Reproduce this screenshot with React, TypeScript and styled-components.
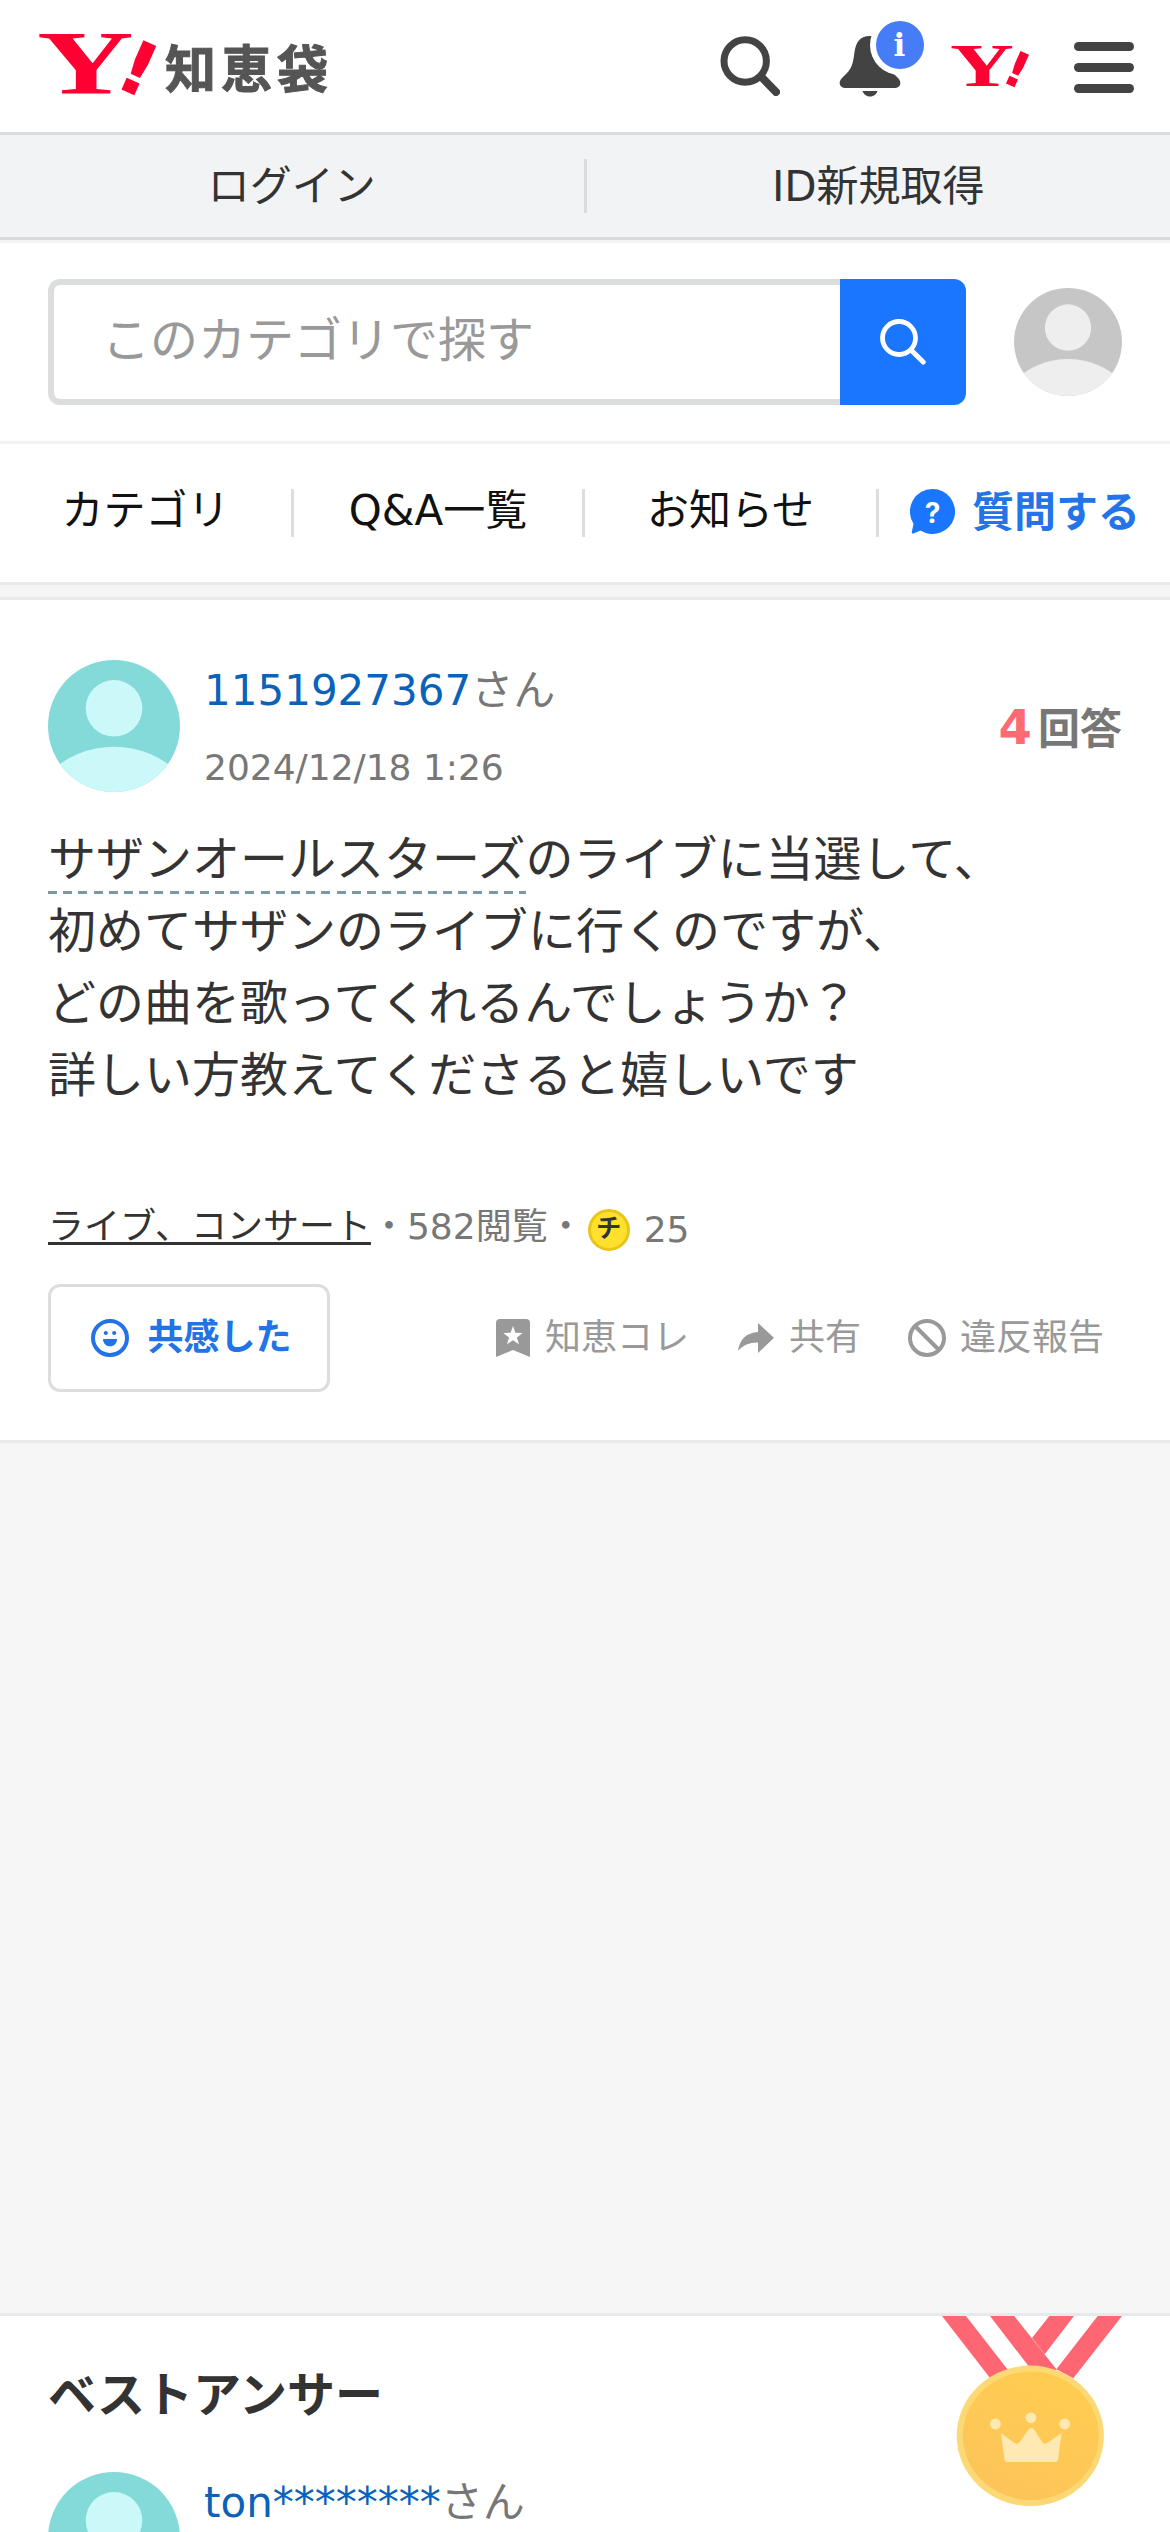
import React from "react";
import styled, { createGlobalStyle } from "styled-components";

const GlobalStyle = createGlobalStyle`
  *, *::before, *::after { box-sizing: border-box; }
  body {
    margin: 0;
    background: #fff;
    color: #333;
    font-family: "DejaVu Sans", "Noto Sans CJK JP", sans-serif;
  }
  a { color: inherit; text-decoration: none; }
  button { font: inherit; border: 0; padding: 0; margin: 0; background: none; }
  svg { display: block; flex: none; }
  h2, p { margin: 0; }
`;

const Page = styled.div`
  width: 1170px;
  height: 2532px;
  overflow: hidden;
  background: #fff;
`;

/* ---------- Masthead ---------- */

const Masthead = styled.header`
  height: 132px;
  padding: 0 36px 0 39px;
  display: flex;
  align-items: flex-start;
  justify-content: space-between;
`;

const Brand = styled.a`
  display: flex;
  gap: 9px;
  padding-top: 33px;
`;

const BrandName = styled.span`
  margin-top: -2px;
  font-family: "Noto Sans CJK JP", sans-serif;
  font-weight: 700;
  font-size: 51px;
  letter-spacing: 5px;
  line-height: 70px;
  color: #555;
  -webkit-text-stroke: 1px #555;
`;

const MastheadTools = styled.nav`
  display: flex;
  align-items: flex-start;
`;

const Tool = styled.button<{ $top: number; $left?: number }>`
  margin-top: ${(p) => p.$top}px;
  margin-left: ${(p) => p.$left ?? 0}px;
`;

/* ---------- Login strip ---------- */

const LoginStrip = styled.div`
  height: 108px;
  display: flex;
  align-items: center;
  background: #f1f3f5;
  border-top: 3px solid #d9dcdd;
  border-bottom: 3px solid #d9dadc;
`;

const LoginLink = styled.a`
  flex: 1;
  padding-top: 1px;
  text-align: center;
  font-size: 42px;
  line-height: 53px;
  & + & {
    border-left: 3px solid #d9dbdc;
  }
`;

/* ---------- Search ---------- */

const SearchArea = styled.div`
  height: 204px;
  padding: 36px 48px;
  border-top: 3px solid #f5f5f5;
  border-bottom: 3px solid #f2f2f2;
  display: flex;
  align-items: center;
  gap: 48px;
`;

const SearchForm = styled.div`
  display: flex;
  width: 918px;
  height: 126px;
`;

const SearchField = styled.div`
  flex: 1;
  border: 6px solid #dcdddd;
  border-right: 0;
  border-radius: 12px 0 0 12px;
  padding: 0 0 12px 48px;
  display: flex;
  align-items: center;
  color: #999;
  font-size: 48px;
`;

const SearchButton = styled.button`
  width: 126px;
  border-radius: 0 12px 12px 0;
  background: #1a75ff;
  display: flex;
  align-items: center;
  justify-content: center;
`;

/* ---------- Tabs ---------- */

const Tabs = styled.nav`
  display: flex;
  align-items: center;
  height: 138px;
`;

const Tab = styled.a<{ $width: number }>`
  width: ${(p) => p.$width}px;
  height: 48px;
  border-right: 3px solid #dcdddd;
  text-align: center;
  font-size: 42px;
  line-height: 43px;
  color: #111;
`;

const AskLink = styled.a`
  flex: 1;
  padding: 0 0 3px 31px;
  display: flex;
  align-items: center;
  gap: 17px;
  font-size: 42px;
  line-height: 48px;
  font-weight: 700;
  color: #2274e8;
`;

const AskLabel = styled.span`
  padding-top: 3px;
`;

const Spacer = styled.div<{ $height: number }>`
  height: ${(p) => p.$height}px;
  background: #f6f6f6;
  border-top: 3px solid #e9e9e9;
  border-bottom: 3px solid #e9e9e9;
`;

/* ---------- Question ---------- */

const Question = styled.article`
  height: 840px;
  padding: 60px 48px 0;
`;

const Author = styled.div`
  display: flex;
  height: 132px;
`;

const AuthorText = styled.div`
  flex: 1;
  margin-left: 24px;
  padding-top: 1px;
`;

const AuthorName = styled.div`
  font-size: 42px;
  line-height: 60px;
  color: #777;
  a { color: #0a62b9; }
`;

const PostedAt = styled.div`
  margin-top: 17px;
  font-size: 36px;
  line-height: 60px;
  color: #777;
`;

const AnswerCount = styled.div`
  margin-top: 37px;
  line-height: 60px;
  font-size: 42px;
  font-weight: 700;
  color: #777;
  display: flex;
  align-items: baseline;
  gap: 6px;
  strong { font-size: 48px; color: #fe6a74; }
`;

const QuestionBody = styled.p`
  margin-top: 31px;
  font-size: 48px;
  line-height: 72px;
  color: #333;
`;

const Keyword = styled.a`
  display: inline-block;
  height: 72px;
  vertical-align: top;
  background: repeating-linear-gradient(90deg, #7b98a8 0 9px, transparent 9px 15.19px) 0 68px / 100% 3px no-repeat;
`;

const Meta = styled.div`
  margin-top: 92px;
  height: 48px;
  display: flex;
  font-size: 36px;
  line-height: 48px;
  color: #777;
`;

const CategoryLink = styled.a`
  color: #333;
  text-decoration: underline;
  text-decoration-thickness: 3px;
  text-underline-offset: 3px;
  text-decoration-skip-ink: none;
`;

const Coins = styled.span`
  display: flex;
  align-items: center;
  gap: 14px;
  margin-left: 4px;
  padding-top: 6px;
`;

const Coin = styled.span`
  width: 42px;
  height: 42px;
  border-radius: 50%;
  border: 3px solid #e9c51c;
  background: #ffe02d;
  color: #333;
  font-size: 25px;
  font-weight: 700;
  line-height: 34px;
  text-align: center;
`;

const Actions = styled.div`
  margin-top: 33px;
  display: flex;
  align-items: center;
  font-size: 36px;
`;

const EmpathyButton = styled.button`
  width: 282px;
  height: 108px;
  margin-right: 166px;
  border: 3px solid #dcdddd;
  border-radius: 12px;
  display: flex;
  align-items: center;
  justify-content: center;
  gap: 18px;
  padding-left: 5px;
  font-weight: 700;
  color: #2173e6;
`;

const ActionLink = styled.a<{ $gap: number; $after?: number }>`
  display: flex;
  align-items: center;
  gap: ${(p) => p.$gap}px;
  margin-right: ${(p) => p.$after ?? 0}px;
  color: #999;
`;

const Label = styled.span`
  line-height: 48px;
  white-space: nowrap;
`;

/* ---------- Best answer ---------- */

const BestAnswer = styled.section`
  padding: 0 48px;
`;

const BestHead = styled.div`
  height: 156px;
  display: flex;
  justify-content: space-between;
`;

const BestTitle = styled.h2`
  padding-top: 43px;
  font-size: 48px;
  line-height: 72px;
  color: #333;
`;

/* ---------- Drawings ---------- */

const YahooMark = ({ width, height }: { width: number; height: number }) => (
  <svg width={width} height={height} viewBox="0 0 117 62" overflow="visible" fill="#ff0033" aria-label="Yahoo!">
    <g transform="translate(-2 60.5) scale(1.47 1)">
      <text fontFamily="Liberation Serif" fontWeight="700" fontSize="91">Y</text>
    </g>
    <g transform="translate(89 59.5) rotate(24) scale(1.08 1)">
      <text x="-16.9" y="0" fontFamily="DejaVu Sans" fontWeight="700" fontSize="74">!</text>
    </g>
  </svg>
);

const SearchGlyph = () => (
  <svg width="60" height="60" viewBox="0 0 60 60" fill="none" stroke="#434343">
    <circle cx="25.2" cy="25" r="21.2" strokeWidth="7" />
    <path d="M41 40.500L56 56" strokeWidth="8" strokeLinecap="round" />
  </svg>
);

const BellGlyph = () => (
  <svg width="84" height="76" viewBox="0 0 84 76" overflow="visible">
    <path
      d="M30 15C19 15 16 22 14.500 31C13 43 12 48 3 56C0 59-1 61 0 64C1 66 3 67 5 67H55C57 67 59 66 60 64C61 61 60 59 57 56C48 48 47 43 45.500 31C44 22 41 15 30 15Z"
      fill="#434343"
    />
    <path d="M22.500 70H37.500C36 74 33 75.500 30 75.500C27 75.500 24 74 22.500 70Z" fill="#434343" />
    <circle cx="60" cy="24" r="30" fill="#fff" />
    <circle cx="60" cy="24" r="24" fill="#477cf7" />
    <text x="59.300" y="34.500" textAnchor="middle" fontFamily="DejaVu Serif" fontWeight="700" fontSize="31" fill="#fff">
      i
    </text>
  </svg>
);

const MenuGlyph = () => (
  <svg width="60" height="51" viewBox="0 0 60 51" fill="#434343">
    <rect width="60" height="9" rx="4.5" />
    <rect y="21" width="60" height="9" rx="4.5" />
    <rect y="42" width="60" height="9" rx="4.5" />
  </svg>
);

const FieldSearchGlyph = () => (
  <svg width="46" height="46" viewBox="0 0 46 46" fill="none" stroke="#fff">
    <circle cx="19" cy="19" r="16.5" strokeWidth="4.8" />
    <path d="M31 31L43.200 43" strokeWidth="5" strokeLinecap="round" />
  </svg>
);

const AskGlyph = () => (
  <svg width="45" height="45" viewBox="0 0 45 45">
    <path
      d="M22.500 0A22.500 22.500 0 1 1 10.500 41.500L3.500 44.500C2.300 44.800 1.600 44.200 1.800 43L3.500 34.700A22.500 22.500 0 0 1 22.500 0Z"
      fill="#1a75ff"
    />
    <text x="22.500" y="33.500" textAnchor="middle" fontFamily="Inter" fontWeight="700" fontSize="28" fill="#fff">
      ?
    </text>
  </svg>
);

const Avatar = ({ id, size, bg, fg }: { id: string; size: number; bg: string; fg: string }) => (
  <svg width={size} height={size} viewBox="0 0 132 132">
    <clipPath id={id}>
      <circle cx="66" cy="66" r="66" />
    </clipPath>
    <g clipPath={`url(#${id})`}>
      <rect width="132" height="132" fill={bg} />
      <circle cx="66" cy="48.300" r="28.300" fill={fg} />
      <circle cx="66" cy="180" r="93.300" fill={fg} />
    </g>
  </svg>
);

const SmileGlyph = () => (
  <svg width="38" height="38" viewBox="0 0 38 38" fill="#2173e6">
    <circle cx="19" cy="19" r="17" fill="none" stroke="#2173e6" strokeWidth="4" />
    <circle cx="14.800" cy="14" r="2.100" />
    <circle cx="23.200" cy="14" r="2.100" />
    <path d="M12 20H26C26 24.500 23 27.300 19 27.300C15 27.300 12 24.500 12 20Z" />
  </svg>
);

const BookmarkGlyph = () => (
  <svg width="34" height="38" viewBox="0 0 34 38">
    <path d="M4 0H30Q34 0 34 4V38L17 31L0 38V4Q0 0 4 0Z" fill="#999" />
    <path d="M17 7L19.400 13.800L26.700 14L20.900 18.400L23 25.300L17 21.200L11 25.300L13.100 18.400L7.300 14L14.600 13.800Z" fill="#fff" />
  </svg>
);

const ShareGlyph = () => (
  <svg width="36" height="30" viewBox="0 0 36 30">
    <path d="M20 0L36 14.800L20 30V19.500C12 19.300 5 22 0 28C1.500 17 8 9.500 20 9Z" fill="#999" />
  </svg>
);

const BanGlyph = () => (
  <svg width="38" height="38" viewBox="0 0 38 38" fill="none" stroke="#999">
    <circle cx="19" cy="19" r="17" strokeWidth="4" />
    <path d="M7 7L31 31" strokeWidth="4" />
  </svg>
);

const Medal = () => (
  <svg width="180" height="191" viewBox="0 0 180 191" overflow="visible">
    <defs>
      <linearGradient id="gold" x1="0.8" y1="0" x2="0.3" y2="1">
        <stop offset="0" stopColor="#ffcd50" />
        <stop offset="1" stopColor="#fdc45a" />
      </linearGradient>
    </defs>
    <g fill="#ff6673">
      <path d="M0 0H24L66 54L48 62Z" />
      <path d="M155.700 0H180L131.300 62.300L114.300 53.300Z" />
      <path d="M107.300 0H132L102.700 38.300L90 22Z" />
      <path d="M48 0H72.300L115 54L88 52Z" />
    </g>
    <ellipse cx="88.300" cy="119.800" rx="73.600" ry="70.200" fill="#fcd975" />
    <ellipse cx="88.800" cy="119.800" rx="68" ry="64.200" fill="url(#gold)" />
    <g fill="#fee9b3">
      <circle cx="53.400" cy="108" r="5.400" />
      <circle cx="89" cy="101.800" r="5.400" />
      <circle cx="122.700" cy="108" r="5.400" />
      <path d="M59 117.300L72.500 127Q75.500 128.800 77.700 126L86.500 113.500Q89.300 110.700 92 113.500L100.500 126.500Q102 128.800 105 127L119.500 117.300L116 144Q115.500 146 113.500 146H65Q63 146 62.600 144Z" />
    </g>
  </svg>
);

/* ---------- Page ---------- */

const TEAL = { bg: "#84dad9", fg: "#cbf8f8" };

export default function App() {
  return (
    <Page>
      <GlobalStyle />
      <Masthead>
        <Brand href="#">
          <YahooMark width={117} height={62} />
          <BrandName>知恵袋</BrandName>
        </Brand>
        <MastheadTools>
          <Tool $top={36} aria-label="検索">
            <SearchGlyph />
          </Tool>
          <Tool $top={21} $left={60} aria-label="通知">
            <BellGlyph />
          </Tool>
          <Tool $top={46} $left={27} aria-label="Yahoo! JAPAN">
            <YahooMark width={78} height={41} />
          </Tool>
          <Tool $top={42} $left={45} aria-label="メニュー">
            <MenuGlyph />
          </Tool>
        </MastheadTools>
      </Masthead>

      <LoginStrip>
        <LoginLink href="#">ログイン</LoginLink>
        <LoginLink href="#">ID新規取得</LoginLink>
      </LoginStrip>

      <SearchArea>
        <SearchForm>
          <SearchField>このカテゴリで探す</SearchField>
          <SearchButton aria-label="検索">
            <FieldSearchGlyph />
          </SearchButton>
        </SearchForm>
        <Avatar id="viewer" size={108} bg="#c6c6c6" fg="#eee" />
      </SearchArea>

      <Tabs>
        <Tab href="#" $width={294}>カテゴリ</Tab>
        <Tab href="#" $width={291}>Q&amp;A一覧</Tab>
        <Tab href="#" $width={294}>お知らせ</Tab>
        <AskLink href="#">
          <AskGlyph />
          <AskLabel>質問する</AskLabel>
        </AskLink>
      </Tabs>

      <Spacer $height={18} />

      <Question>
        <Author>
          <Avatar id="asker" size={132} {...TEAL} />
          <AuthorText>
            <AuthorName>
              <a href="#">1151927367</a>さん
            </AuthorName>
            <PostedAt>2024/12/18 1:26</PostedAt>
          </AuthorText>
          <AnswerCount>
            <strong>4</strong>回答
          </AnswerCount>
        </Author>

        <QuestionBody>
          <Keyword href="#">サザンオールスターズ</Keyword>のライブに当選して、
          <br />
          初めてサザンのライブに行くのですが、
          <br />
          どの曲を歌ってくれるんでしょうか？
          <br />
          詳しい方教えてくださると嬉しいです
        </QuestionBody>

        <Meta>
          <CategoryLink href="#">ライブ、コンサート</CategoryLink>
          <span>・582閲覧・</span>
          <Coins>
            <Coin>チ</Coin>
            25
          </Coins>
        </Meta>

        <Actions>
          <EmpathyButton>
            <SmileGlyph />
            <Label>共感した</Label>
          </EmpathyButton>
          <ActionLink href="#" $gap={15} $after={49}>
            <BookmarkGlyph />
            <Label>知恵コレ</Label>
          </ActionLink>
          <ActionLink href="#" $gap={15} $after={47}>
            <ShareGlyph />
            <Label>共有</Label>
          </ActionLink>
          <ActionLink href="#" $gap={14}>
            <BanGlyph />
            <Label>違反報告</Label>
          </ActionLink>
        </Actions>
      </Question>

      <Spacer $height={876} />

      <BestAnswer>
        <BestHead>
          <BestTitle>ベストアンサー</BestTitle>
          <Medal />
        </BestHead>
        <Author>
          <Avatar id="answerer" size={132} {...TEAL} />
          <AuthorText>
            <AuthorName>
              <a href="#">ton********</a>さん
            </AuthorName>
          </AuthorText>
        </Author>
      </BestAnswer>
    </Page>
  );
}
